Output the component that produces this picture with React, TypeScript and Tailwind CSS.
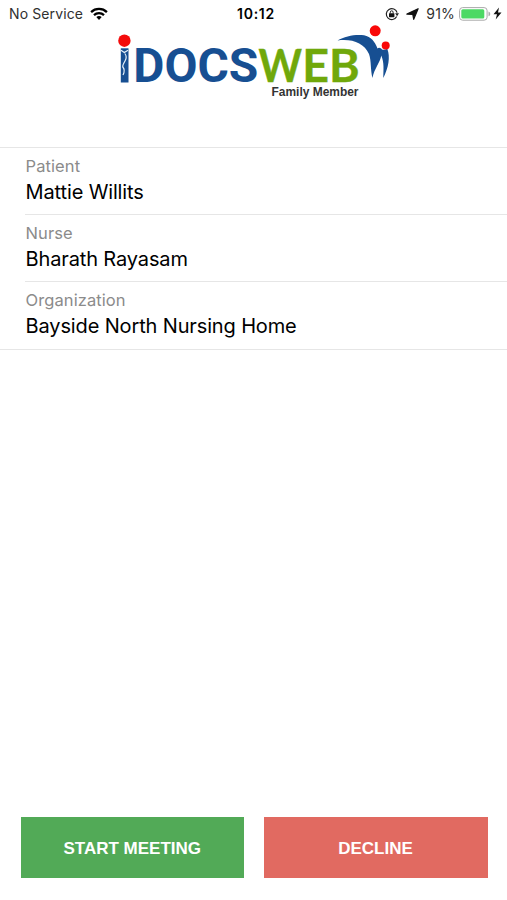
import React from "react";

function WifiIcon() {
  return (
    <svg className="ml-[7px] h-[14px] w-[18px]" viewBox="0 0 18 14" fill="none" stroke="#000" strokeWidth="2.3">
      <path d="M1.100 5.100C5.500 .9 12.500 .9 16.900 5.100" />
      <path d="M4 8.100C6.800 5.500 11.200 5.500 14 8.100" />
      <path d="M6.300 10.100Q9 7.900 11.700 10.100L9 12.900Z" fill="#000" stroke="none" />
    </svg>
  );
}

function RotationLockIcon() {
  return (
    <svg className="h-[14px] w-[14px]" viewBox="0 0 14 14" fill="none" stroke="#222">
      <path d="M11.700 9.600A5.500 5.500 0 1 1 12.100 5.600" strokeWidth="1.200" />
      <path d="M10.100 6.300H14L12.100 9.200Z" fill="#222" stroke="none" />
      <rect x="4" y="6.200" width="5.400" height="4" rx=".4" fill="#111" stroke="none" />
      <path d="M5.300 6.500V5.200a1.400 1.400 0 0 1 2.800 0v1.300" strokeWidth="1" />
    </svg>
  );
}

function StatusBar() {
  return (
    <header className="grid h-[27px] grid-cols-[1fr_auto_1fr] items-center text-[14px] text-[#303030]">
      <div className="flex items-center pl-[9px]">
        <span className="tracking-[0.120px]">No Service</span>
        <WifiIcon />
      </div>
      <span className="pl-[5px] font-semibold tracking-[0.700px] text-black">10:12</span>
      <div className="flex items-center justify-end pr-[5px]">
        <RotationLockIcon />
        <svg className="ml-[7px] h-[12px] w-[13px]" viewBox="0 0 13 12">
          <path d="M12.100 .7L7.700 11.300L6.800 6.500L.9 6.100Z" fill="#111" stroke="#111" strokeWidth="1.200" strokeLinejoin="round" />
        </svg>
        <span className="ml-[7px] tracking-[0.200px]">91%</span>
        <svg className="ml-[4px] h-[14px] w-[32px]" viewBox="0 0 32 14">
          <rect x=".6" y=".6" width="27.500" height="12.600" rx="3" fill="#fff" stroke="#a9a9a9" />
          <rect x="2.300" y="2.300" width="23" height="9.200" rx="1.500" fill="#4cd964" />
          <path d="M29.500 4.500q1.800 .6 1.800 2.400t-1.800 2.400z" fill="#aaa" />
        </svg>
        <svg className="ml-[2px] h-[13px] w-[9px]" viewBox="0 0 9 13">
          <path d="M6 .5L.5 7.200H4L2.700 12.500L8.500 5.500H5Z" fill="#111" />
        </svg>
      </div>
    </header>
  );
}

function Logo() {
  return (
    <svg className="ml-[110px] h-[80px] w-[290px]" viewBox="110 24 290 80" role="img" aria-label="iDocsWeb Family Member">
      <circle cx="124.400" cy="40.700" r="6.200" fill="#f40b0b" />
      <rect x="120.800" y="48.300" width="7.700" height="34.200" fill="#174f92" />
      <path d="M121 50.300L124.300 52.500L128 50.300M124.800 53.500Q127.500 57 125 61T122.800 67Q125.500 70 123 75" fill="none" stroke="#e8f3fb" strokeWidth="1.200" />
      <text x="133.300" y="82.300" fontSize="48" fontWeight="700" textLength="125" lengthAdjust="spacingAndGlyphs" fill="#174f92" className="font-['Roboto',sans-serif]">DOCS</text>
      <text y="82" fontSize="46.500" fontWeight="700" fill="#70a80b" stroke="#70a80b" strokeWidth=".4" className="font-['Lato',sans-serif]">
        <tspan x="258.500" textLength="43.500" lengthAdjust="spacingAndGlyphs">W</tspan>
        <tspan x="302.200">E</tspan>
        <tspan x="329">B</tspan>
      </text>
      <path d="M337.500 40.500C345 36 356 34 364 35.300C371 37 375 41.500 377.500 48.500C379 47 381 48 382 49.500C383.500 50 385.500 49.500 387.300 48.800C390.500 57 388.500 68 383.300 78C383.300 70 384.500 63 381.200 55.500C380.500 62 374 69 372.500 78C370.300 70 371.500 61 369 54C364 43 352 38.500 337.500 40.500Z" fill="#174f92" />
      <circle cx="375.200" cy="30.800" r="5.500" fill="#f90808" />
      <circle cx="385.700" cy="45.500" r="4" fill="#f90808" />
      <text x="271.500" y="96.400" fontSize="12" fontWeight="700" textLength="87" lengthAdjust="spacingAndGlyphs" fill="#333" className="font-['Liberation_Sans',sans-serif]">Family Member</text>
    </svg>
  );
}

const fields = [
  { label: "Patient", value: "Mattie Willits" },
  { label: "Nurse", value: "Bharath Rayasam" },
  { label: "Organization", value: "Bayside North Nursing Home" },
];

export default function App() {
  return (
    <main className="flex h-[900px] w-[507px] flex-col overflow-hidden bg-white font-['Inter',sans-serif]">
      <StatusBar />
      <div className="-mt-[3px] h-[123px]">
        <Logo />
      </div>
      <dl className="border-y border-[#e6e6e6] pl-[25px]">
        {fields.map(({ label, value }) => (
          <div key={label} className="h-[67px] border-b border-[#e6e6e6] pt-[8px] pl-[0.600px] last:border-b-0">
            <dt className="text-[16.500px] leading-[21px] tracking-[0.080px] text-[#8b8b8b]">{label}</dt>
            <dd className="mt-px text-[20px] leading-[28px] tracking-[-0.140px] text-black">{value}</dd>
          </div>
        ))}
      </dl>
      <div className="mt-auto mb-[22px] ml-[20.500px] flex gap-[19.500px] font-['Liberation_Sans',sans-serif] text-[17px] font-bold text-white">
        <button className="h-[61px] w-[223.500px] bg-[#52aa57] pt-0.5">START MEETING</button>
        <button className="h-[61px] w-[224px] bg-[#e16a61] pt-0.5">DECLINE</button>
      </div>
    </main>
  );
}
